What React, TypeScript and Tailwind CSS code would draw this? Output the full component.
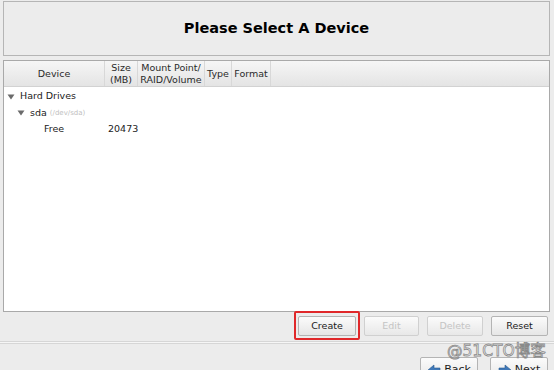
import React from "react";

type Col = { label: React.ReactNode; w: string };

const cols: Col[] = [
  { label: "Device", w: "w-[101px]" },
  { label: <>Size<br />(MB)</>, w: "w-[33px]" },
  { label: <>Mount Point/<br />RAID/Volume</>, w: "w-[67px]" },
  { label: "Type", w: "w-[27px]" },
  { label: "Format", w: "w-[39px]" },
];

function Tri({ className = "" }: { className?: string }) {
  return (
    <svg width="8" height="6" viewBox="0 0 8 6" className={className}>
      <path d="M0.5 0.5 L7.5 0.5 L4 5.5 Z" fill="#6b6b6b" />
    </svg>
  );
}

function Btn({ label, disabled = false, w }: { label: string; disabled?: boolean; w: string }) {
  return (
    <div
      className={`${w} h-[20px] flex items-center justify-center rounded-[2px] border border-[#b4b4b4] bg-gradient-to-b from-[#fbfbfb] to-[#e6e6e6] text-[9.5px] ${
        disabled ? "text-[#c4c4c4] border-[#d0d0d0] from-[#f0f0f0] to-[#e8e8e8]" : "text-[#1a1a1a]"
      }`}
    >
      {label}
    </div>
  );
}

function Arrow({ dir }: { dir: "left" | "right" }) {
  return (
    <svg width="14" height="12" viewBox="0 0 14 12">
      {dir === "left" ? (
        <path d="M1 6 L7 1 L7 4 L13 4 L13 8 L7 8 L7 11 Z" fill="#3f78b8" stroke="#2a5a90" strokeWidth="0.6" />
      ) : (
        <path d="M13 6 L7 1 L7 4 L1 4 L1 8 L7 8 L7 11 Z" fill="#3f78b8" stroke="#2a5a90" strokeWidth="0.6" />
      )}
    </svg>
  );
}

export default function App() {
  return (
    <div className="relative w-[554px] h-[370px] overflow-hidden bg-[#ececec] font-['DejaVu_Sans',sans-serif] text-[#1e1e1e]">
      {/* Header */}
      <div className="mx-[3px] mt-[1px] w-[547px] h-[55px] border border-[#b5b5b5] bg-[#ececec] flex items-center justify-center">
        <h1 className="text-[14.5px] font-bold text-black pt-[1px]">Please Select A Device</h1>
      </div>

      {/* Device tree */}
      <div className="mx-[3px] mt-[4px] w-[547px] h-[252px] border border-[#a9a9a9] bg-white flex flex-col">
        <div className="h-[26px] flex border-b border-[#d2d2d2] bg-gradient-to-b from-[#f6f6f6] to-[#e4e4e4] text-[9.5px] leading-[12px] text-[#2a2a2a]">
          {cols.map((c, i) => (
            <div key={i} className={`${c.w} flex items-center justify-center text-center border-r border-[#d8d8d8]`}>
              <span>{c.label}</span>
            </div>
          ))}
          <div className="flex-1" />
        </div>
        <div className="text-[9.5px] text-[#222] pt-[1px]">
          <div className="h-[17px] flex items-center pl-[3px] gap-[5px]">
            <Tri />
            <span>Hard Drives</span>
          </div>
          <div className="h-[16px] flex items-center pl-[13px] gap-[5px]">
            <Tri />
            <span>sda</span>
            <span className="text-[7px] text-[#c0c0c0] -ml-[2px]">(/dev/sda)</span>
          </div>
          <div className="h-[16px] flex items-center">
            <span className="w-[104px] pl-[40px]">Free</span>
            <span>20473</span>
          </div>
        </div>
      </div>

      {/* Action buttons */}
      <div className="flex justify-end gap-[8px] pr-[6px] mt-[4px]">
        <div className="relative">
          <Btn label="Create" w="w-[58px]" />
          <div className="absolute -left-[4px] -top-[5px] w-[66px] h-[29px] border-2 border-[#e0282a] rounded-[2px]" />
        </div>
        <Btn label="Edit" w="w-[55px]" disabled />
        <Btn label="Delete" w="w-[56px]" disabled />
        <Btn label="Reset" w="w-[57px]" />
      </div>

      {/* Separator */}
      <div className="mt-[5px] h-[3px] border-t border-b border-[#d6d6d6] bg-[#f6f6f6]" />

      {/* Nav buttons */}
      <div className="flex justify-end gap-[12px] pr-[6px] mt-[13px]">
        <div className="w-[58px] h-[22px] flex items-center justify-center gap-[3px] rounded-[2px] border border-[#b4b4b4] bg-gradient-to-b from-[#fbfbfb] to-[#e8e8e8] text-[11px] pt-[4px]">
          <Arrow dir="left" />
          <span>Back</span>
        </div>
        <div className="w-[58px] h-[22px] flex items-center justify-center gap-[3px] rounded-[2px] border border-[#b4b4b4] bg-gradient-to-b from-[#fbfbfb] to-[#e8e8e8] text-[11px] pt-[4px]">
          <Arrow dir="right" />
          <span>Next</span>
        </div>
      </div>

      {/* Watermark */}
      <div className="absolute left-[447px] top-[342px] text-[15.5px] leading-[18px] text-white font-['DejaVu_Sans','Noto_Sans_CJK_SC',sans-serif] [-webkit-text-stroke:0.8px_#8a8a8a]">
        @51CTO博客
      </div>
    </div>
  );
}
